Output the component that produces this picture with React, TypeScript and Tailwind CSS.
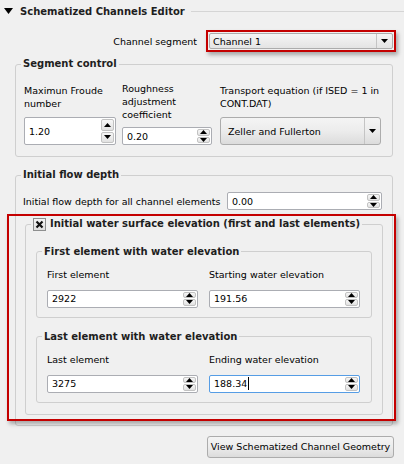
import React from 'react';

function ArrowUp() {
  return (
    <svg width="7" height="4" viewBox="0 0 7 4">
      <path d="M0 4 L3.5 0 L7 4 Z" fill="#000" />
    </svg>
  );
}

function ArrowDown() {
  return (
    <svg width="7" height="4" viewBox="0 0 7 4">
      <path d="M0 0 L7 0 L3.5 4 Z" fill="#000" />
    </svg>
  );
}

function Spin({
  value,
  className = '',
  focused = false,
}: {
  value: string;
  className?: string;
  focused?: boolean;
}) {
  return (
    <div
      className={
        'flex bg-white border rounded-[2px] ' +
        (focused ? 'border-[#569de5] ' : 'border-[#abadb3] ') +
        className
      }
    >
      <div className="flex-1 flex items-center pl-[4px] whitespace-nowrap">
        {value}
        {focused && <span className="ml-px w-px h-[13px] bg-black" />}
      </div>
      <div className="w-[15px] flex flex-col p-px gap-px">
        <div className="flex-1 flex items-center justify-center rounded-[2px] border border-[#c2c2c2] bg-gradient-to-b from-[#f7f7f7] to-[#e1e1e1]">
          <ArrowUp />
        </div>
        <div className="flex-1 flex items-center justify-center rounded-[2px] border border-[#c2c2c2] bg-gradient-to-b from-[#f7f7f7] to-[#e1e1e1]">
          <ArrowDown />
        </div>
      </div>
    </div>
  );
}

function Combo({ value, className = '' }: { value: string; className?: string }) {
  return (
    <div
      className={
        'flex border border-[#acacac] rounded-[3px] bg-gradient-to-b from-[#f4f4f4] via-[#ececec] to-[#dcdcdc] ' +
        className
      }
    >
      <div className="flex-1 flex items-center whitespace-nowrap pl-[7px]">{value}</div>
      <div className="w-[16px] flex items-center justify-center border-l border-[#c4c4c4]">
        <ArrowDown />
      </div>
    </div>
  );
}

function Group({
  title,
  className = '',
  children,
}: {
  title: React.ReactNode;
  className?: string;
  children: React.ReactNode;
}) {
  return (
    <fieldset className={'border border-[#cfcfcf] rounded-[3px] p-0 min-w-0 ' + className}>
      <legend className="ml-[5px] px-[2px] font-['DejaVu_Sans',sans-serif] font-bold text-[10px] leading-[14px] text-[#1e1e1e]">
        {title}
      </legend>
      {children}
    </fieldset>
  );
}

function ElementGroup({
  title,
  label1,
  value1,
  label2,
  value2,
  focused = false,
  className = '',
}: {
  title: string;
  label1: string;
  value1: string;
  label2: string;
  value2: string;
  focused?: boolean;
  className?: string;
}) {
  return (
    <Group title={title} className={className}>
      <div className="grid grid-cols-2 gap-x-[11px] pl-[10px] pr-[11px] pt-[9px] pb-[9px]">
        <div className="whitespace-nowrap">{label1}</div>
        <div className="whitespace-nowrap">{label2}</div>
        <Spin value={value1} className="h-[18px] mt-[9px]" />
        <Spin value={value2} className="h-[18px] mt-[9px]" focused={focused} />
      </div>
    </Group>
  );
}

export default function App() {
  return (
    <div className="w-[404px] h-[464px] overflow-hidden bg-[#f0f0f0] text-black font-['DejaVu_Sans',sans-serif] text-[9.5px] leading-[13px] flex flex-col">
      {/* collapsible header */}
      <div className="h-[22px] flex items-center pl-[4px]">
        <svg width="9" height="6" viewBox="0 0 9 6">
          <path d="M0 0 L9 0 L4.5 6 Z" fill="#000" />
        </svg>
        <span className="ml-[7px] font-bold text-[10px] text-[#1e1e1e] whitespace-nowrap">
          Schematized Channels Editor
        </span>
        <div className="flex-1 ml-[6px] h-px bg-[#d5d5d5]" />
      </div>

      {/* channel segment */}
      <div className="mt-[8px] h-[22px] flex items-center">
        <div className="w-[197px] text-right whitespace-nowrap">Channel segment</div>
        <div className="ml-[9px] w-[190px] h-[22px] border-2 border-[#c40000] p-px shadow-[2px_3px_4px_rgba(0,0,0,0.3)]">
          <div className="h-full flex border border-[#acacac] rounded-[2px] bg-gradient-to-b from-[#f5f5f5] to-[#e4e4e4]">
            <div className="flex-1 flex items-center pl-[3px]">Channel 1</div>
            <div className="w-[16px] flex items-center justify-center border-l border-[#c4c4c4]">
              <ArrowDown />
            </div>
          </div>
        </div>
      </div>

      {/* segment control */}
      <Group title="Segment control" className="mt-[5px] ml-[15px] w-[378px]">
        <div className="flex pl-[8px] pt-[11px] pb-[11px]">
          <div className="w-[92px] h-[63px] flex flex-col justify-between">
            <div className="mt-[2px] whitespace-nowrap">
              Maximun Froude
              <br />
              number
            </div>
            <Spin value="1.20" className="h-[28px]" />
          </div>
          <div className="ml-[6px] w-[90px] h-[63px] flex flex-col justify-between">
            <div className="whitespace-nowrap">
              Roughness
              <br />
              adjustment
              <br />
              coefficient
            </div>
            <Spin value="0.20" className="h-[18px]" />
          </div>
          <div className="ml-[8px] w-[161px] h-[63px] flex flex-col justify-between">
            <div className="mt-[2px] whitespace-nowrap">
              Transport equation (if ISED = 1 in
              <br />
              CONT.DAT)
            </div>
            <Combo value="Zeller and Fullerton" className="h-[28px]" />
          </div>
        </div>
      </Group>

      {/* initial flow depth */}
      <Group title="Initial flow depth" className="mt-[11px] ml-[15px] w-[378px]">
        <div className="mt-[10px] h-[18px] flex items-center pl-[7px] pr-[10px]">
          <div className="whitespace-nowrap">Initial flow depth for all channel elements</div>
          <Spin value="0.00" className="ml-auto w-[155px] h-[18px]" />
        </div>

        <div className="relative mt-[7px] mx-[9px] mb-[10px]">
          <Group
            title={
              <span className="inline-flex items-center gap-[4px]">
                <span className="w-[13px] h-[13px] border border-[#8e8f8f] bg-gradient-to-b from-[#f4f4f4] to-[#dedede] flex items-center justify-center">
                  <svg width="9" height="9" viewBox="0 0 9 9">
                    <path d="M1.5 1.5 L7.5 7.5 M7.5 1.5 L1.5 7.5" stroke="#111" strokeWidth="2.2" />
                  </svg>
                </span>
                Initial water surface elevation (first and last elements)
              </span>
            }
          >
            <div className="pt-[12px] pb-[11px] pl-[10px] pr-[10px]">
              <ElementGroup
                title="First element with water elevation"
                label1="First element"
                value1="2922"
                label2="Starting water elevation"
                value2="191.56"
              />
              <ElementGroup
                title="Last element with water elevation"
                label1="Last element"
                value1="3275"
                label2="Ending water elevation"
                value2="188.34"
                focused
                className="mt-[12px]"
              />
            </div>
          </Group>
          <div className="absolute -top-[3px] -left-[18px] -right-[13px] -bottom-[6px] border-2 border-[#c40000] shadow-[2px_3px_4px_rgba(0,0,0,0.3)] pointer-events-none" />
        </div>
      </Group>

      {/* footer button */}
      <div className="mt-[10px] flex justify-end pr-[10px]">
        <button className="w-[187px] h-[22px] border border-[#acacac] rounded-[3px] bg-gradient-to-b from-[#f4f4f4] via-[#ececec] to-[#dcdcdc] whitespace-nowrap">
          View Schematized Channel Geometry
        </button>
      </div>
    </div>
  );
}
